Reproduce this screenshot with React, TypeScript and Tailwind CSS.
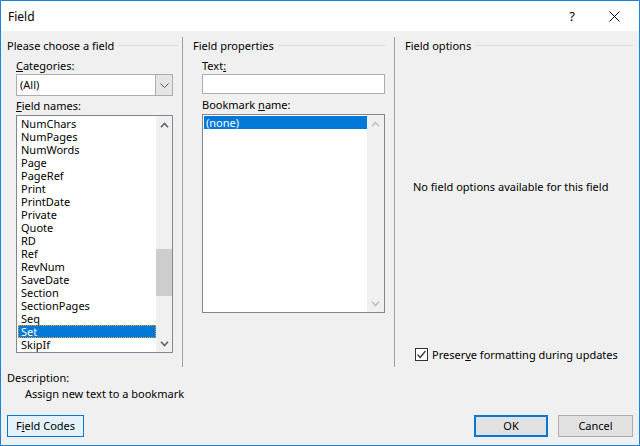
import React from 'react';

const fieldNames = [
  'NumChars', 'NumPages', 'NumWords', 'Page', 'PageRef', 'Print', 'PrintDate', 'Private', 'Quote',
  'RD', 'Ref', 'RevNum', 'SaveDate', 'Section', 'SectionPages', 'Seq', 'Set', 'SkipIf',
];

const Chevron: React.FC<{ up?: boolean; color: string }> = ({ up, color }) => (
  <svg width="9" height="6" viewBox="0 0 9 6">
    <path d={up ? 'M1 5.2 L4.5 1.5 L8 5.2' : 'M1 0.8 L4.5 4.5 L8 0.8'} fill="none" stroke={color} strokeWidth="1.6" />
  </svg>
);

const GroupHeading: React.FC<{ title: string; className: string }> = ({ title, className }) => (
  <div className={`flex items-center h-[15px] ${className}`}>
    <span className="whitespace-nowrap">{title}</span>
    <div className="flex-1 h-px bg-[#dcdcdc] ml-[4px]" />
  </div>
);

export default function App() {
  return (
    <div
      className="w-[640px] h-[446px] border border-[#1883d7] bg-[#f0f0f0] flex flex-col text-[11px] text-black leading-[15px]"
      style={{ fontFamily: '"Noto Sans", "Open Sans", sans-serif' }}
    >
      {/* Title bar */}
      <div className="h-[30px] bg-white flex items-center pl-[7px] text-[12px]">
        <span className="flex-1">Field</span>
        <span className="w-[20px] text-center text-[13px] mr-[27px]">?</span>
        <svg width="11" height="11" viewBox="0 0 11 11" className="mr-[19px]">
          <path d="M0.5 0.5 L10.5 10.5 M10.5 0.5 L0.5 10.5" stroke="#000" strokeWidth="1" />
        </svg>
      </div>

      {/* Columns */}
      <div className="flex h-[330px] mt-[6px]">
        {/* Please choose a field */}
        <div className="w-[182px] border-r border-[#a0a0a0] pt-px">
          <GroupHeading title="Please choose a field" className="pl-[6px] pr-[4px]" />
          <div className="pl-[15px] w-[172px]">
            <div className="mt-[5px] h-[15px]"><span className="underline">C</span>ategories:</div>
            <div className="mt-px h-[22px] border border-[#adadad] bg-white flex">
              <span className="flex-1 pl-[3px] leading-[20px]">(All)</span>
              <div className="w-[17px] bg-[#e5e5e5] border-l border-[#adadad] flex items-center justify-center">
                <svg width="9" height="5" viewBox="0 0 9 5">
                  <path d="M0.5 0.5 L4.5 4.5 L8.5 0.5" fill="none" stroke="#555" strokeWidth="1" />
                </svg>
              </div>
            </div>
            <div className="mt-[2px] h-[15px]"><span className="underline">F</span>ield names:</div>
            <div className="mt-[2px] h-[238px] border border-[#828790] bg-white flex">
              <div className="flex-1 pt-px pl-px">
                {fieldNames.map((n) => (
                  <div
                    key={n}
                    className={`h-[13px] leading-[13px] pl-[3px] ${
                      n === 'Set' ? 'bg-[#0078d7] text-white outline outline-1 outline-dotted outline-[#f0a040] -outline-offset-1' : ''
                    }`}
                  >
                    {n}
                  </div>
                ))}
              </div>
              <div className="w-[16px] bg-[#f0f0f0] flex flex-col items-center">
                <div className="h-[17px] flex items-center justify-center"><Chevron up color="#606060" /></div>
                <div className="flex-1 w-full relative">
                  <div className="absolute left-0 right-0 top-[116px] h-[47px] bg-[#cdcdcd]" />
                </div>
                <div className="h-[17px] flex items-center justify-center"><Chevron color="#606060" /></div>
              </div>
            </div>
          </div>
        </div>

        {/* Field properties */}
        <div className="w-[212px] border-r border-[#a0a0a0] pt-px">
          <GroupHeading title="Field properties" className="pl-[10px] pr-[9px]" />
          <div className="pl-[19px] w-[202px]">
            <div className="mt-[5px] h-[15px]">Text<span className="underline">:</span></div>
            <div className="mt-px h-[20px] border border-[#adadad] bg-white" />
            <div className="mt-[3px] h-[15px]">Bookmark <span className="underline">n</span>ame:</div>
            <div className="mt-[2px] h-[199px] border border-[#828790] bg-white flex">
              <div className="flex-1 pt-px pl-px">
                <div className="h-[13px] leading-[13px] pl-[2px] bg-[#0078d7] text-white">(none)</div>
              </div>
              <div className="w-[17px] bg-[#f0f0f0] flex flex-col items-center justify-between">
                <div className="h-[17px] flex items-center justify-center"><Chevron up color="#c0c0c0" /></div>
                <div className="h-[17px] flex items-center justify-center"><Chevron color="#c0c0c0" /></div>
              </div>
            </div>
          </div>
        </div>

        {/* Field options */}
        <div className="flex-1 pt-px">
          <GroupHeading title="Field options" className="pl-[10px] pr-[6px]" />
          <div className="pl-[18px] mt-[126px] h-[15px]">No field options available for this field</div>
          <div className="pl-[20px] mt-[153px] h-[15px] flex items-center">
            <div className="w-[13px] h-[13px] border border-[#333] bg-white flex items-center justify-center">
              <svg width="11" height="11" viewBox="0 0 11 11">
                <path d="M1.5 5.5 L4.2 8.5 L9.5 2" fill="none" stroke="#333" strokeWidth="1.2" />
              </svg>
            </div>
            <span className="ml-[4px]">Preser<span className="underline">v</span>e formatting during updates</span>
          </div>
        </div>
      </div>

      {/* Description */}
      <div className="mt-[3px] pl-[6px] h-[15px]">Description:</div>
      <div className="mt-px pl-[24px] h-[15px]">Assign new text to a bookmark</div>

      {/* Buttons */}
      <div className="mt-[14px] flex pl-[6px] pr-[6px]">
        <button className="w-[77px] h-[22px] border border-[#0078d7] bg-[#e5f1fb] leading-[20px]">
          F<span className="underline">i</span>eld Codes
        </button>
        <div className="flex-1" />
        <button className="w-[74px] h-[22px] border-2 border-[#0078d7] bg-[#e1e1e1] leading-[18px]">OK</button>
        <button className="w-[75px] h-[22px] ml-[10px] border border-[#adadad] bg-[#e1e1e1] leading-[20px]">Cancel</button>
      </div>
    </div>
  );
}
